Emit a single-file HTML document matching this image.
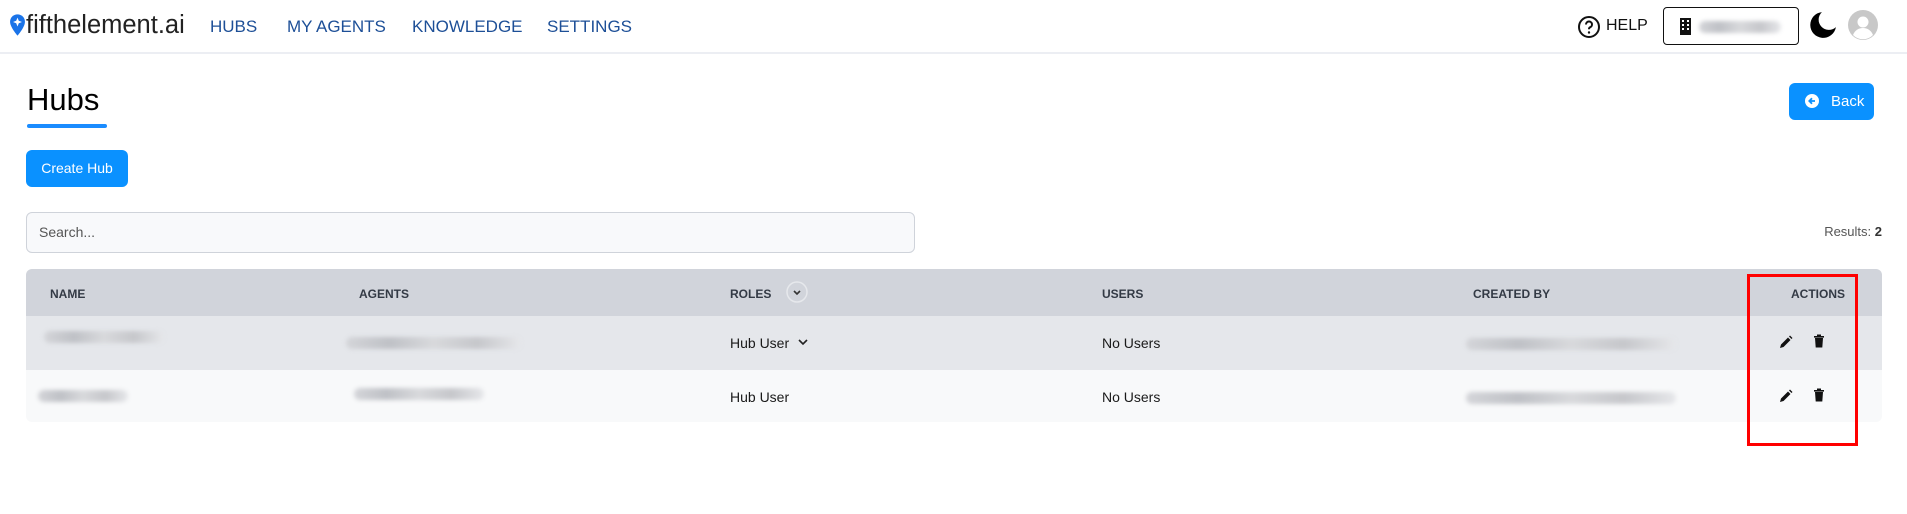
<!DOCTYPE html>
<html><head><meta charset="utf-8"><style>
*{box-sizing:border-box;margin:0;padding:0}
body{width:1907px;height:514px;background:#fff;font-family:"Liberation Sans",Arial,sans-serif;position:relative;overflow:hidden;color:#111}
.a{position:absolute}
.nav{left:0;top:0;width:1907px;height:54px;border-bottom:2px solid #eceef3}
.nl{top:17px;font-size:17px;color:#1d4f97}
.blur{position:absolute;height:12px;border-radius:6px;background:linear-gradient(90deg,#d4d5d9,#bfc1c6,#d8d9dc,#c6c7cb,#e6e7ea);filter:blur(2px)}
.th{top:287px;font-size:12px;font-weight:bold;color:#333a45}
.td{font-size:14px;color:#1a1a1a}
</style></head><body>
<div class="a nav"></div>
<svg class="a" style="left:9px;top:13px" width="17" height="24" viewBox="0 0 16 22"><path d="M8 1C4 1 1 4 1 8c0 5 7 13 7 13s7-8 7-13c0-4-3-7-7-7z" fill="#1a73e8"/><path d="M8 4l1.2 3 3 1.2-3 1.2L8 12.4 6.8 9.4 3.8 8.2l3-1.2z" fill="#fff"/></svg>
<div class="a" style="left:26px;top:11px;font-size:25.5px;color:#222">fifthelement.ai</div>
<div class="a nl" style="left:210px">HUBS</div>
<div class="a nl" style="left:287px">MY AGENTS</div>
<div class="a nl" style="left:412px">KNOWLEDGE</div>
<div class="a nl" style="left:547px">SETTINGS</div>
<svg class="a" style="left:1577px;top:15px" width="24" height="24" viewBox="0 0 24 24"><circle cx="12" cy="12" r="10" fill="none" stroke="#111" stroke-width="2"/><path d="M9 9.5a3 3 0 1 1 4 2.8c-.8.4-1 1-1 2" fill="none" stroke="#111" stroke-width="2"/><circle cx="12" cy="17.5" r="1.2" fill="#111"/></svg>
<div class="a" style="left:1606px;top:17px;font-size:16px;color:#111">HELP</div>
<div class="a" style="left:1663px;top:7px;width:136px;height:38px;border:1.5px solid #111;border-radius:4px"></div>
<svg class="a" style="left:1679px;top:18px" width="13" height="17" viewBox="0 0 13 17"><rect x="1" y="0" width="11" height="17" fill="#111"/><g fill="#fff"><rect x="3" y="2" width="2" height="2"/><rect x="8" y="2" width="2" height="2"/><rect x="3" y="6" width="2" height="2"/><rect x="8" y="6" width="2" height="2"/><rect x="3" y="10" width="2" height="2"/><rect x="8" y="10" width="2" height="2"/></g></svg>
<div class="blur" style="left:1699px;top:21px;width:82px;height:12px"></div>
<svg class="a" style="left:1809px;top:11px" width="28" height="28" viewBox="0 0 26 26"><path d="M12 1a12 12 0 1 0 13 14A9 9 0 0 1 12 1z" fill="#000"/></svg>
<svg class="a" style="left:1848px;top:10px" width="30" height="30" viewBox="0 0 30 30"><circle cx="15" cy="15" r="15" fill="#c8c8c8"/><circle cx="15" cy="12" r="5.5" fill="#fff"/><path d="M5 25c2-5 6-7 10-7s8 2 10 7a14 14 0 0 1-20 0z" fill="#fff"/></svg>
<div class="a" style="left:27px;top:82px;font-size:31px;color:#000">Hubs</div>
<div class="a" style="left:27px;top:124px;width:80px;height:4px;border-radius:2px;background:#1a8cff"></div>
<div class="a" style="left:1789px;top:83px;width:85px;height:37px;border-radius:6px;background:#0a91ff;color:#fff;font-size:15px;line-height:37px;padding-left:42px">Back</div>
<svg class="a" style="left:1805px;top:94px" width="14" height="14" viewBox="0 0 14 14"><circle cx="7" cy="7" r="7" fill="#fff"/><path d="M10 7H4.5M7 4.3 4.3 7 7 9.7" fill="none" stroke="#0a91ff" stroke-width="1.8"/></svg>
<div class="a" style="left:26px;top:150px;width:102px;height:37px;border-radius:6px;background:#0a91ff;color:#fff;font-size:14px;line-height:37px;text-align:center">Create Hub</div>
<div class="a" style="left:26px;top:212px;width:889px;height:41px;border:1px solid #cfd3da;border-radius:6px;background:#f8f9fb;font-size:14px;color:#555;line-height:39px;padding-left:12px">Search...</div>
<div class="a" style="right:25px;top:224px;font-size:13px;color:#555">Results: <b style="color:#333">2</b></div>
<div class="a" style="left:26px;top:269px;width:1856px;height:153px;border-radius:6px;overflow:hidden;background:#f8f9fa">
<div style="height:47px;background:#d1d4db"></div><div style="height:54px;background:#e5e7eb"></div></div>
<div class="a th" style="left:50px">NAME</div>
<div class="a th" style="left:359px">AGENTS</div>
<div class="a th" style="left:730px">ROLES</div>
<svg class="a" style="left:786px;top:281px" width="22" height="22" viewBox="0 0 22 22"><circle cx="11" cy="11" r="10" fill="none" stroke="#e6e8ec" stroke-width="1.5"/><path d="M8 10l3 3 3-3" fill="none" stroke="#333" stroke-width="1.6"/></svg>
<div class="a th" style="left:1102px">USERS</div>
<div class="a th" style="left:1473px">CREATED BY</div>
<div class="a th" style="left:1791px">ACTIONS</div>
<div class="blur" style="left:44px;top:331px;width:120px"></div>
<div class="blur" style="left:346px;top:337px;width:175px"></div>
<div class="a td" style="left:730px;top:335px">Hub User</div>
<svg class="a" style="left:798px;top:338px" width="10" height="8" viewBox="0 0 10 8"><path d="M1 2l4 4 4-4" fill="none" stroke="#222" stroke-width="1.6"/></svg>
<div class="a td" style="left:1102px;top:335px">No Users</div>
<div class="blur" style="left:1466px;top:338px;width:210px"></div>
<div class="blur" style="left:38px;top:390px;width:90px"></div>
<div class="blur" style="left:354px;top:388px;width:130px"></div>
<div class="a td" style="left:730px;top:389px">Hub User</div>
<div class="a td" style="left:1102px;top:389px">No Users</div>
<div class="blur" style="left:1466px;top:392px;width:210px"></div>
<svg class="a" style="left:1779px;top:335px" width="14" height="14" viewBox="0 0 14 14"><path d="M1 13l1-3.5 7-7 2.5 2.5-7 7z M10 1.5l1-1 2.5 2.5-1 1z" fill="#111"/></svg>
<svg class="a" style="left:1813px;top:334px" width="12" height="14" viewBox="0 0 12 14"><path d="M1 2h10v1.6H1zM4 .5h4V2H4zM2 4h8l-.7 9.5H2.7z" fill="#111"/></svg>
<svg class="a" style="left:1779px;top:389px" width="14" height="14" viewBox="0 0 14 14"><path d="M1 13l1-3.5 7-7 2.5 2.5-7 7z M10 1.5l1-1 2.5 2.5-1 1z" fill="#111"/></svg>
<svg class="a" style="left:1813px;top:388px" width="12" height="14" viewBox="0 0 12 14"><path d="M1 2h10v1.6H1zM4 .5h4V2H4zM2 4h8l-.7 9.5H2.7z" fill="#111"/></svg>
<div class="a" style="left:1747px;top:274px;width:111px;height:172px;border:3px solid #f00"></div>
</body></html>
